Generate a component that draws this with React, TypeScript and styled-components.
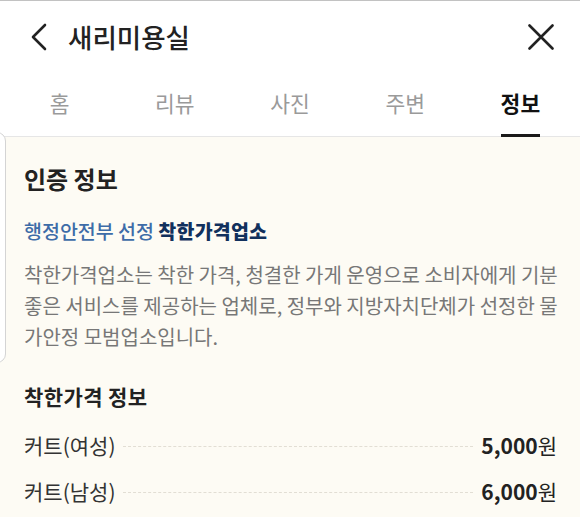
import React from "react";
import styled, { createGlobalStyle } from "styled-components";

const Global = createGlobalStyle`
  html, body { margin: 0; padding: 0; background: #ffffff; }
  body { font-family: "Noto Sans CJK KR", "Noto Sans", sans-serif; -webkit-font-smoothing: antialiased; }
  * { box-sizing: border-box; }
`;

const Page = styled.div`
  position: relative;
  width: 580px;
  height: 517px;
  overflow: hidden;
  background: #fdfbf4;
  border-top: 1px solid #c2c2c2;
`;

const Header = styled.header`
  background: #ffffff;
  border-bottom: 1px solid #e6e6e6;
`;

const TopBar = styled.div`
  height: 71px;
  display: flex;
  align-items: center;
  padding: 0 26px 0 26px;
  gap: 16px;
`;

const IconButton = styled.button`
  border: 0;
  background: none;
  padding: 0;
  width: 26px;
  height: 30px;
  display: flex;
  align-items: center;
  justify-content: center;
  color: #222;
`;

const Title = styled.h1`
  flex: 1;
  margin: 0;
  font-size: 26.5px;
  font-weight: 500;
  color: #222;
  line-height: 34px;
`;

const Tabs = styled.nav`
  display: grid;
  grid-template-columns: repeat(5, 1fr);
  height: 64px;
  padding: 0 2px;
`;

const Tab = styled.div<{ $active?: boolean }>`
  position: relative;
  display: flex;
  align-items: center;
  justify-content: center;
  padding-bottom: 4px;
  font-size: 21.5px;
  font-weight: ${(p) => (p.$active ? 700 : 400)};
  color: ${(p) => (p.$active ? "#111" : "#9a9a9a")};
`;

const TabLabel = styled.span<{ $active?: boolean }>`
  position: relative;
  height: 100%;
  display: flex;
  align-items: center;
  &::after {
    content: "";
    display: ${(p) => (p.$active ? "block" : "none")};
    position: absolute;
    left: 0;
    right: 0;
    bottom: -5px;
    height: 3px;
    background: #1a1a1a;
  }
`;

const Content = styled.main`
  padding: 27px 23px 0 24px;
`;

const SideCard = styled.div`
  position: absolute;
  left: -20px;
  top: 131px;
  width: 26px;
  height: 231px;
  background: #ffffff;
  border: 1px solid #d4d4d4;
  border-radius: 9px;
`;

const SectionTitle = styled.h2`
  margin: 0;
  font-size: 24px;
  line-height: 30px;
  font-weight: 700;
  color: #222;
`;

const CertLine = styled.div`
  margin-top: 24px;
  font-size: 19.5px;
  line-height: 26px;
  font-weight: 500;
  color: #3d6ca8;
`;

const CertMark = styled.span`
  font-weight: 900;
  color: #11305d;
  letter-spacing: 0.2px;
`;

const Paragraph = styled.div`
  margin-top: 15px;
  font-size: 20px;
  line-height: 31px;
  color: #777777;
`;

const ParaLine = styled.div<{ $fill?: boolean }>`
  white-space: nowrap;
  text-align: ${(p) => (p.$fill ? "justify" : "left")};
  text-align-last: ${(p) => (p.$fill ? "justify" : "left")};
`;

const SubTitle = styled.h3`
  margin: 30px 0 0 0;
  font-size: 21px;
  line-height: 28px;
  font-weight: 700;
  color: #222;
  letter-spacing: 0.4px;
`;

const PriceList = styled.div`
  margin-top: 21px;
  display: flex;
  flex-direction: column;
  gap: 18px;
`;

const PriceRow = styled.div`
  display: flex;
  align-items: center;
  height: 28px;
  gap: 4px;
`;

const ItemName = styled.span`
  font-size: 21px;
  color: #333;
  white-space: nowrap;
`;

const Dots = styled.span`
  flex: 1;
  border-top: 1px dashed #e2ded4;
  margin: 2px 4px 0 4px;
`;

const Price = styled.span`
  font-size: 21px;
  color: #222;
  white-space: nowrap;
`;

const Amount = styled.b`
  font-weight: 700;
  font-size: 21px;
`;

const ChevronLeft = () => (
  <svg width="18" height="28" viewBox="0 0 18 28" fill="none">
    <path d="M15 2 L3 14 L15 26" stroke="#222" strokeWidth="2.6" strokeLinecap="round" strokeLinejoin="round" />
  </svg>
);

const CloseIcon = () => (
  <svg width="26" height="26" viewBox="0 0 26 26" fill="none">
    <path d="M1.5 1.5 L24.5 24.5 M24.5 1.5 L1.5 24.5" stroke="#222" strokeWidth="2.6" strokeLinecap="round" />
  </svg>
);

const tabs = ["홈", "리뷰", "사진", "주변", "정보"];
const prices = [
  { name: "커트(여성)", amount: "5,000" },
  { name: "커트(남성)", amount: "6,000" },
];

export default function App() {
  return (
    <>
      <Global />
      <Page>
        <Header>
          <TopBar>
            <IconButton aria-label="뒤로">
              <ChevronLeft />
            </IconButton>
            <Title>새리미용실</Title>
            <IconButton aria-label="닫기">
              <CloseIcon />
            </IconButton>
          </TopBar>
          <Tabs>
            {tabs.map((t) => (
              <Tab key={t} $active={t === "정보"}>
                <TabLabel $active={t === "정보"}>{t}</TabLabel>
              </Tab>
            ))}
          </Tabs>
        </Header>
        <SideCard />
        <Content>
          <SectionTitle>인증 정보</SectionTitle>
          <CertLine>
            행정안전부 선정 <CertMark>착한가격업소</CertMark>
          </CertLine>
          <Paragraph>
            <ParaLine $fill>착한가격업소는 착한 가격, 청결한 가게 운영으로 소비자에게 기분</ParaLine>
            <ParaLine $fill>좋은 서비스를 제공하는 업체로, 정부와 지방자치단체가 선정한 물</ParaLine>
            <ParaLine>가안정 모범업소입니다.</ParaLine>
          </Paragraph>
          <SubTitle>착한가격 정보</SubTitle>
          <PriceList>
            {prices.map((p) => (
              <PriceRow key={p.name}>
                <ItemName>{p.name}</ItemName>
                <Dots />
                <Price>
                  <Amount>{p.amount}</Amount>원
                </Price>
              </PriceRow>
            ))}
          </PriceList>
        </Content>
      </Page>
    </>
  );
}
